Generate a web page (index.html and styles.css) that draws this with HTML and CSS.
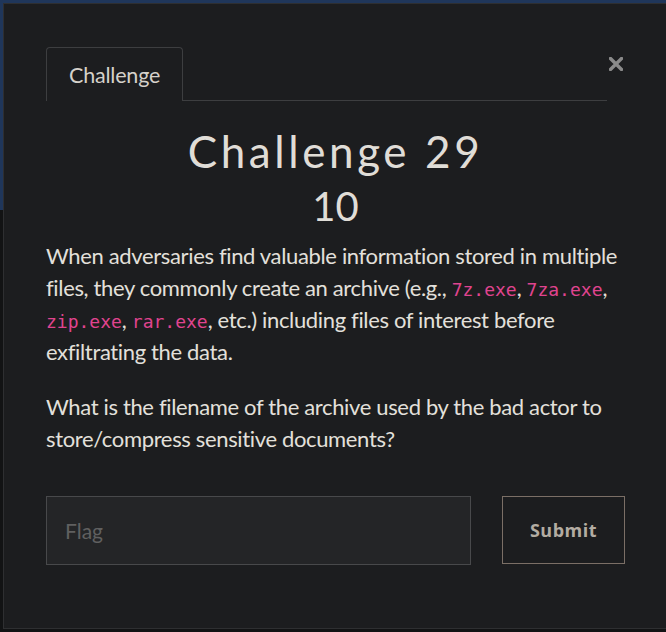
FILE: index.html
```html
<!DOCTYPE html>
<html>
<head>
<meta charset="utf-8">
<link rel="stylesheet" href="styles.css">
</head>
<body>
<div class="backdrop"></div>
<div class="modal">
  <div class="modal-head">
    <div class="tabs">
      <div class="tab">Challenge</div>
    </div>
    <button class="close" aria-label="Close">
      <svg width="14" height="14" viewBox="0 0 14 14"><path d="M1.5 1.5 L12.5 12.5 M12.5 1.5 L1.5 12.5" stroke="#8a8a8a" stroke-width="3.4" stroke-linecap="square"/></svg>
    </button>
  </div>
  <h2 class="title">Challenge 29</h2>
  <div class="points">10</div>
  <div class="desc">
    <p>When adversaries find valuable information stored in multiple files, they commonly create an archive (e.g., <code>7z.exe</code>, <code>7za.exe</code>, <code>zip.exe</code>, <code>rar.exe</code>, etc.) including files of interest before exfiltrating the data.</p>
    <p>What is the filename of the archive used by the bad actor to store/compress sensitive documents?</p>
  </div>
  <form class="flag-form">
    <input class="flag-input" type="text" placeholder="Flag">
    <button class="submit" type="button">Submit</button>
  </form>
</div>
</body>
</html>
```
FILE: styles.css
```css
html, body {
  margin: 0;
  padding: 0;
  background: #121314;
  overflow: hidden;
  height: 632px;
}
.backdrop {
  position: absolute;
  left: 0;
  top: 0;
  width: 666px;
  height: 210px;
  background: #1f365a;
}
.modal {
  position: relative;
  margin: 3px 0 0 3px;
  width: 663px;
  height: 626px;
  box-sizing: border-box;
  background: #1c1d1f;
  border: 1px solid #2e2f31;
  border-right: none;
  padding: 43px 0 0 42px;
  font-family: Lato, "Liberation Sans", sans-serif;
  color: #e3e0db;
}
.modal > * {
  width: 579px;
}
.modal-head {
  display: flex;
  align-items: flex-start;
}
.tabs {
  width: 561px;
  border-bottom: 1px solid #3d3e40;
  display: flex;
}
.tab {
  border: 1px solid #3d3e40;
  border-bottom: none;
  border-radius: 4px 4px 0 0;
  padding: 0 22px;
  height: 54px;
  line-height: 54px;
  font-size: 21.5px;
  letter-spacing: -0.2px;
  color: #d5d1ca;
  margin-bottom: -1px;
  box-sizing: border-box;
  background: #1c1d1f;
}
.close {
  background: none;
  border: none;
  padding: 0;
  margin: 10px 0 0 2px;
  width: 14px;
  height: 14px;
  display: flex;
}
.title {
  margin: 24px 0 0 0;
  text-align: center;
  font-size: 44px;
  font-weight: 400;
  letter-spacing: 3.6px;
  line-height: 52px;
  color: #e0ddd7;
}
.points {
  text-align: center;
  font-size: 40px;
  line-height: 46px;
  margin-top: 6px;
  color: #e0ddd7;
}
.desc {
  margin-top: 11px;
}
.desc p {
  margin: 0 0 23px 0;
  font-size: 22px;
  letter-spacing: -0.35px;
  line-height: 32px;
}
code {
  font-family: "DejaVu Sans Mono", monospace;
  font-size: 18px;
  line-height: 1;
  letter-spacing: 0;
  color: #e0448f;
}
.flag-form {
  display: flex;
  justify-content: space-between;
  margin-top: 41px;
}
.flag-input {
  width: 425px;
  height: 69px;
  box-sizing: border-box;
  background: #242527;
  border: 1px solid #48494b;
  padding: 0 18px;
  font-family: Lato, "Liberation Sans", sans-serif;
  font-size: 21px;
  color: #ddd;
  outline: none;
}
.flag-input::placeholder {
  color: #606060;
}
.submit {
  width: 123px;
  height: 68px;
  box-sizing: border-box;
  background: transparent;
  border: 1px solid #7b6f66;
  font-family: "Open Sans", Lato, sans-serif;
  font-weight: 700;
  font-size: 18px;
  letter-spacing: 0.5px;
  color: #b3aca2;
}
```
